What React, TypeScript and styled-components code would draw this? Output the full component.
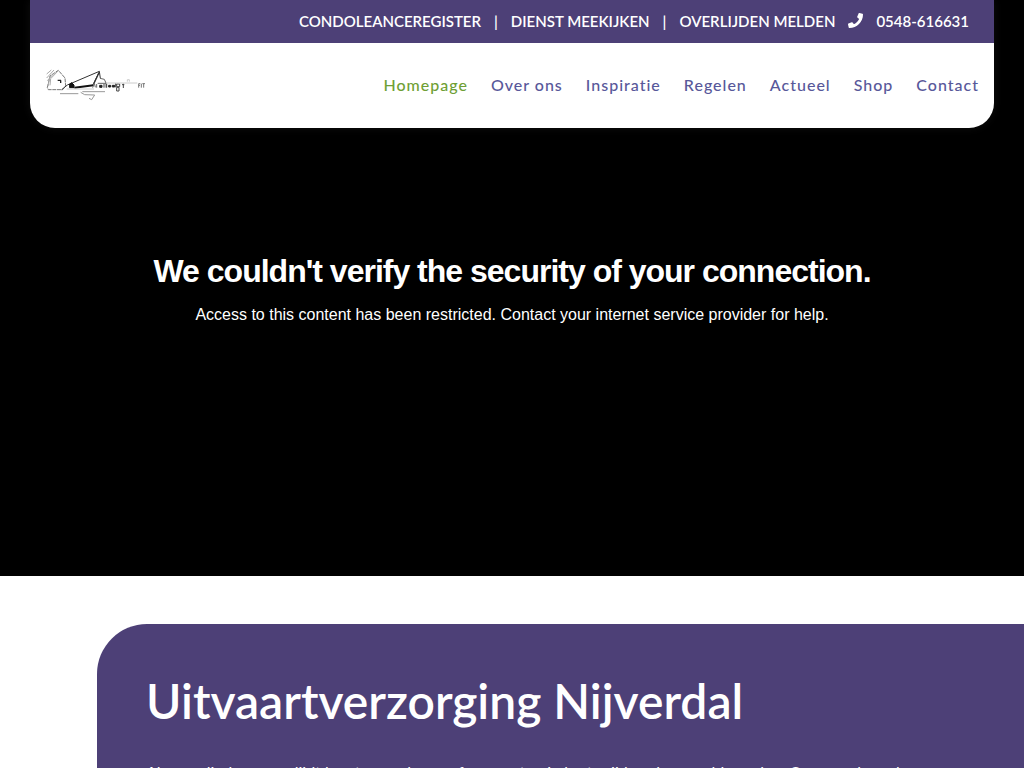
import React from "react";
import styled, { createGlobalStyle } from "styled-components";
import { FaPhone } from "react-icons/fa";

const purple = "#4d4077";

const GlobalStyle = createGlobalStyle`
  *, *::before, *::after { box-sizing: border-box; }
  body {
    margin: 0;
    background: #fff;
    color: #fff;
    font-family: Lato, sans-serif;
    font-size: 16px;
    line-height: 24px;
  }
  h1, h2, p, ul { margin: 0; padding: 0; }
  a { color: inherit; text-decoration: none; }
`;

const Hero = styled.section`
  display: flex;
  flex-direction: column;
  min-height: 576px;
  padding: 0 30px;
  background: #000;
`;

const Header = styled.header`
  overflow: hidden;
  border-radius: 0 0 25px 25px;
  background: #fff;
  box-shadow: 0 0 10px rgba(255, 255, 255, 0.06);
`;

const TopBar = styled.div`
  display: flex;
  justify-content: flex-end;
  align-items: center;
  height: 43px;
  padding: 0 25px 2px;
  background: ${purple};
  font-size: 15px;
  font-weight: 600;
  white-space: nowrap;
`;

const TopLink = styled.a`
  display: flex;
  align-items: center;
  gap: 13px;
  & + &:not(:last-child)::before {
    content: "|";
    margin-left: 13px;
  }
  &:last-child {
    margin-left: 13px;
  }
`;

const NavBar = styled.div`
  display: flex;
  justify-content: space-between;
  align-items: center;
  height: 85px;
  padding: 0 15px 2px;
`;

const Logo = styled.a`
  display: flex;
`;

const Menu = styled.ul`
  display: flex;
  gap: 23px;
  list-style: none;
`;

const MenuLink = styled.a<{ $active?: boolean }>`
  color: ${(p) => (p.$active ? "#6f9f35" : "#58589a")};
  font-weight: 500;
  letter-spacing: 1px;
  white-space: nowrap;
`;

const Notice = styled.div`
  padding: 122px 0 0;
  text-align: center;
  font-family: "Liberation Sans", sans-serif;
`;

const NoticeTitle = styled.h2`
  font-size: 32px;
  line-height: 42px;
  letter-spacing: -1px;
`;

const NoticeText = styled.p`
  margin-top: 11px;
`;

const Intro = styled.section`
  margin: 48px 0 48px 97px;
  padding: 48px 96px 48px 49px;
  border-top-left-radius: 50px;
  background: ${purple};
`;

const IntroTitle = styled.h1`
  margin-bottom: 30px;
  font-size: 48px;
  font-weight: 600;
  line-height: 58px;
`;

const menu = ["Homepage", "Over ons", "Inspiratie", "Regelen", "Actueel", "Shop", "Contact"];

function FarmLogo() {
  return (
    <svg width="100" height="34" viewBox="45 38 300 102" fill="none" stroke="#333" strokeWidth="3" role="img" aria-label="Uitvaartverzorging Nijverdal">
      <path d="M52 97l8-35 25-17 20 23 2 24-9 11H55z" stroke="#777" strokeDasharray="12 2" />
      <path d="M50 68l22-24M52 76l20-22M50 56l14-12M60 62l-6 30M85 46L62 70l-2 20" stroke="#aaa" />
      <path d="M83 75h10M92 75v8" stroke="#222" strokeWidth="4" />
      <path d="M95 103l17-14 96-41 3 21M208 49l-20 42" />
      <path d="M207 52l-16 34" strokeWidth="4" />
      <path d="M119 86l6-4 7 7v8h-13z" fill="#111" stroke="#111" />
      <path d="M133 97l57-7" stroke="#111" strokeWidth="6" />
      <path d="M188 97l5-14 3 13M210 69l13 3 5 11v14M203 84h25M200 86v11" stroke="#666" />
      <path d="M209 90h7v6h-7zM236 90h6v5h-6zM247 90h7v5h-7z" fill="#222" stroke="#222" />
      <path d="M222 86v11M230 85v12M257 84v12M280 85v13M276 88h7" stroke="#444" />
      <path d="M260 86h9v8h-9zM260 96h7v11h-7z" stroke="#444" />
      <path d="M228 83h94M292 79v-6h6v6M110 101h82" stroke="#ccc" />
      <path d="M90 115h55M157 109h68M152 111l12 7 30 1-9 14-8-4" stroke="#999" />
      <path d="M326 97V85h5M326 90h4M334 85v12M337 85h8M341 85v12" stroke="#777" />
    </svg>
  );
}

export default function App() {
  return (
    <>
      <GlobalStyle />
      <Hero>
        <Header>
          <TopBar>
            <TopLink href="#condoleance">CONDOLEANCEREGISTER</TopLink>
            <TopLink href="#meekijken">DIENST MEEKIJKEN</TopLink>
            <TopLink href="#melden">OVERLIJDEN MELDEN</TopLink>
            <TopLink href="tel:0548616631">
              <FaPhone size={15} aria-hidden />
              0548-616631
            </TopLink>
          </TopBar>
          <NavBar>
            <Logo href="#home">
              <FarmLogo />
            </Logo>
            <nav>
              <Menu>
                {menu.map((item, i) => (
                  <li key={item}>
                    <MenuLink href={`#${item.toLowerCase().replace(" ", "-")}`} $active={i === 0}>
                      {item}
                    </MenuLink>
                  </li>
                ))}
              </Menu>
            </nav>
          </NavBar>
        </Header>
        <Notice>
          <NoticeTitle>We couldn't verify the security of your connection.</NoticeTitle>
          <NoticeText>Access to this content has been restricted. Contact your internet service provider for help.</NoticeText>
        </Notice>
      </Hero>
      <Intro>
        <IntroTitle>Uitvaartverzorging Nijverdal</IntroTitle>
        <p>
          Als een dierbare overlijdt komt er veel op u af en moet er in korte tijd veel geregeld worden. Onze
          medewerkers
        </p>
      </Intro>
    </>
  );
}
